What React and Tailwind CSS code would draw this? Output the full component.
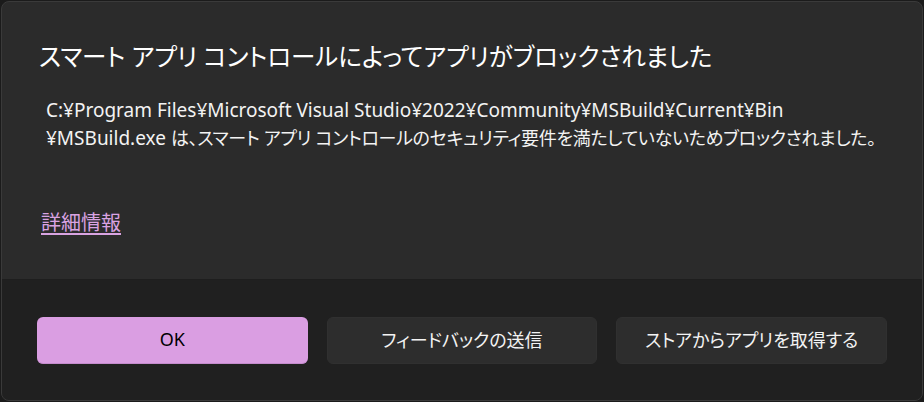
import React from "react";

const jp = "font-['Segoe_UI','Noto_Sans','Noto_Sans_CJK_JP',sans-serif] [font-feature-settings:'palt']";

export default function App() {
  const buttons = [
    { label: "OK", primary: true },
    { label: "フィードバックの送信" },
    { label: "ストアからアプリを取得する" },
  ];

  return (
    <div className={`h-[402px] w-[924px] bg-[#1b1b1b] p-px ${jp}`}>
      <div className="flex h-full flex-col overflow-hidden rounded-[8px] border border-[#3a3a3a] bg-[#2b2b2b]">
        {/* Content */}
        <div className="flex-1 px-[37px] pt-[38px]">
          <h1 className="text-[24.5px] leading-[34px] font-normal text-white">
            スマート アプリ コントロールによってアプリがブロックされました
          </h1>
          <p className="mt-[22px] pl-[7px] text-[19px] leading-[28px] whitespace-nowrap text-[#f3f3f3]">
            C:¥Program Files¥Microsoft Visual Studio¥2022¥Community¥MSBuild¥Current¥Bin
            <br />
            ¥MSBuild.exe{" "}
            <span className="text-[18px] tracking-[-0.3px]">
              は、スマート アプリ コントロールのセキュリティ要件を満たしていないためブロックされました。
            </span>
          </p>
          <a
            href="#"
            className="mt-[57px] ml-[2px] inline-block text-[20px] leading-[28px] text-[#d9a3e2] underline underline-offset-[3px]"
          >
            詳細情報
          </a>
        </div>

        {/* Footer */}
        <div className="flex h-[121px] items-center gap-[19px] border-t border-[#1e1e1e] bg-[#202020] px-[35px]">
          {buttons.map((b) => (
            <button
              key={b.label}
              className={`h-[47px] w-[271px] rounded-[6px] text-[18px] ${
                b.primary
                  ? "bg-[#da9ee2] text-black border-b border-[#c48bcc]"
                  : "bg-[#2d2d2d] text-[#f3f3f3] border border-[#303030]"
              }`}
            >
              {b.label}
            </button>
          ))}
        </div>
      </div>
    </div>
  );
}
